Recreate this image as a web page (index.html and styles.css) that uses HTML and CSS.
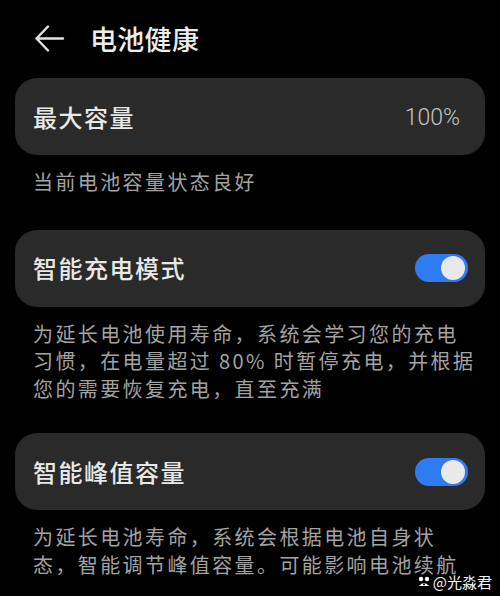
FILE: index.html
```html
<!DOCTYPE html>
<html lang="zh-CN">
<head>
<meta charset="utf-8">
<title>电池健康</title>
<link rel="stylesheet" href="styles.css">
</head>
<body>
<div class="page">
  <header class="header">
    <svg class="back" width="30" height="28" viewBox="0 0 30 28" aria-hidden="true">
      <path d="M13 1.5 L1.5 13.5 L13 25.5 M1.5 13.5 H28" fill="none" stroke="#e2e2e2" stroke-width="2.4" stroke-linecap="round" stroke-linejoin="round"/>
    </svg>
    <h1 class="title">电池健康</h1>
  </header>

  <section class="card">
    <span class="card-label">最大容量</span>
    <span class="card-value">100%</span>
  </section>
  <p class="note note-short">当前电池容量状态良好</p>

  <section class="card">
    <span class="card-label">智能充电模式</span>
    <span class="toggle"><span class="knob"></span></span>
  </section>
  <p class="note">为延长电池使用寿命，系统会学习您的充电<br>习惯，在电量超过 80% 时暂停充电，并根据<br>您的需要恢复充电，直至充满</p>

  <section class="card">
    <span class="card-label">智能峰值容量</span>
    <span class="toggle"><span class="knob"></span></span>
  </section>
  <p class="note">为延长电池寿命，系统会根据电池自身状<br>态，智能调节峰值容量。可能影响电池续航</p>

  <div class="watermark">
    <svg width="12" height="11" viewBox="0 0 12 11" aria-hidden="true">
      <circle cx="3" cy="3" r="2.2" fill="#fff"/>
      <circle cx="9" cy="3" r="2.2" fill="#fff"/>
      <path d="M1 10 Q6 4 11 10 Z" fill="#fff"/>
      <circle cx="6" cy="8.3" r="1" fill="#000"/>
    </svg>
    <span>@光淼君</span>
  </div>
</div>
</body>
</html>
```

FILE: styles.css
```css
html, body {
  margin: 0;
  padding: 0;
  background: #000;
}

body {
  font-family: "Noto Sans CJK SC", "Noto Sans", sans-serif;
  color: #e6e6e6;
  width: 500px;
  height: 596px;
  overflow: hidden;
}

.page {
  position: relative;
  height: 596px;
  padding: 0 15px;
  box-sizing: border-box;
}

.header {
  height: 78px;
  display: flex;
  align-items: center;
  padding-left: 20px;
  padding-bottom: 2px;
  box-sizing: border-box;
}

.back {
  display: block;
  margin-top: 1px;
}

.title {
  margin: 0 0 0 25px;
  font-size: 27px;
  font-weight: 500;
  line-height: 1;
  color: #ececec;
  letter-spacing: 0.3px;
}

.card {
  height: 77px;
  background: #2a2a2a;
  border-radius: 22px;
  display: flex;
  align-items: center;
  justify-content: space-between;
  padding: 0 17px 0 18px;
  box-sizing: border-box;
}

.card-label {
  font-size: 24px;
  font-weight: 500;
  letter-spacing: 1.5px;
  color: #e8e8e8;
  line-height: 1;
}

.card-value {
  font-family: Roboto, "Noto Sans", sans-serif;
  font-size: 23px;
  font-weight: 300;
  color: #c4c4c4;
  margin-right: 8px;
  margin-top: 1px;
}

.toggle {
  width: 53px;
  height: 28px;
  border-radius: 14px;
  background: #2f7cf2;
  position: relative;
  display: block;
}

.knob {
  position: absolute;
  top: 2px;
  right: 3px;
  width: 24px;
  height: 24px;
  border-radius: 50%;
  background: #e9e9ec;
}

.note {
  margin: 0;
  padding: 13px 6px 31px 18px;
  font-size: 20px;
  line-height: 27.5px;
  letter-spacing: 2.4px;
  color: #a3a3a3;
  white-space: nowrap;
}

.note-short {
  padding-bottom: 34px;
}

.watermark {
  position: absolute;
  right: 8px;
  bottom: 7px;
  display: flex;
  align-items: center;
  gap: 3px;
  font-size: 15px;
  line-height: 1;
  color: #f4f4f4;
}

.watermark svg {
  display: block;
}
```
